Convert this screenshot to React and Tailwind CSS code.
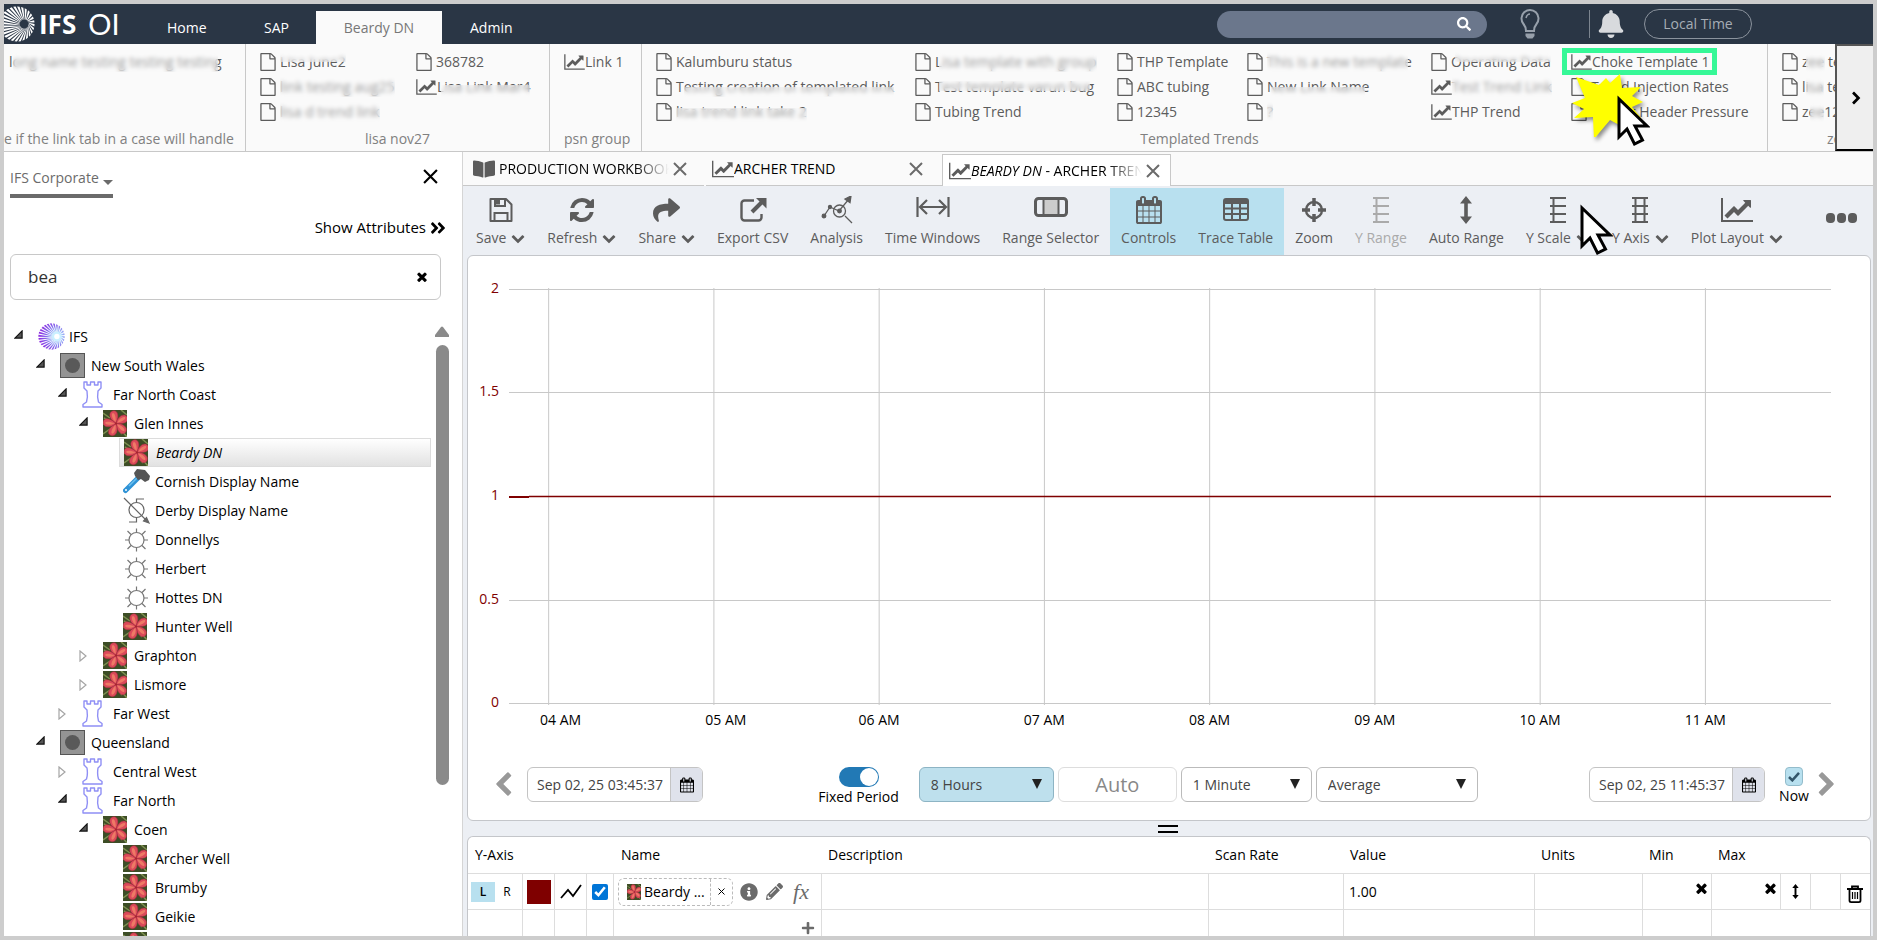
import { useState } from 'react';
import { FaShare, FaBell, FaSearch, FaInfoCircle, FaPencilAlt, FaPlus, FaAngleDoubleRight, FaBookOpen } from 'react-icons/fa';
import clsx from 'clsx';

function Glyph({ viewBox = '0 0 1792 1792', d, className }) {
  return (
    <svg viewBox={viewBox} fill="currentColor" className={clsx('shrink-0', className)} aria-hidden="true">
      <path d={d} />
    </svg>
  );
}

const FileIcon = ({ className = 'h-[18px] w-4' }) => (
  <Glyph
    viewBox="128 0 1536 1792"
    className={className}
    d="M1596 380q28 28 48 76t20 88v1152q0 40-28 68t-68 28h-1344q-40 0-68-28t-28-68v-1600q0-40 28-68t68-28h896q40 0 88 20t76 48zm-444-244v376h376q-10-29-22-41l-313-313q-12-12-41-22zm384 1528v-1024h-416q-40 0-68-28t-28-68v-416h-768v1536h1280z"
  />
);

const LineChartIcon = ({ className = 'h-[18px] w-[21px]' }) => (
  <Glyph
    viewBox="0 0 2048 1792"
    className={className}
    d="M2048 1536v128h-2048v-1536h128v1408h1920zm-128-1248v435q0 21-19.5 29.5t-35.5-7.5l-121-121-633 633q-10 10-23 10t-23-10l-233-233-416 416-192-192 585-585q10-10 23-10t23 10l233 233 464-464-121-121q-16-16-7.5-35.5t29.5-19.5h435q14 0 23 9t9 23z"
  />
);

const ChevronIcon = ({ className }) => (
  <Glyph
    className={className}
    d="M1683 808l-742 741q-19 19-45 19t-45-19l-742-741q-19-19-19-45.5t19-45.5l166-165q19-19 45-19t45 19l531 531 531-531q19-19 45-19t45 19l166 165q19 19 19 45.5t-19 45.5z"
  />
);

const TimesIcon = ({ className }) => (
  <Glyph
    viewBox="300 300 1192 1256"
    className={className}
    d="M1490 1322q0 40-28 68l-136 136q-28 28-68 28t-68-28l-294-294-294 294q-28 28-68 28t-68-28l-136-136q-28-28-28-68t28-68l294-294-294-294q-28-28-28-68t28-68l136-136q28-28 68-28t68 28l294 294 294-294q28-28 68-28t68 28l136 136q28 28 28 68t-28 68l-294 294 294 294q28 28 28 68z"
  />
);

const CalendarIcon = ({ className }) => (
  <Glyph
    viewBox="64 0 1664 1792"
    className={className}
    d="M192 1664h288v-288h-288v288zm352 0h320v-288h-320v288zm-352-352h288v-320h-288v320zm352 0h320v-320h-320v320zm-352-384h288v-288h-288v288zm736 736h320v-288h-320v288zm-384-736h320v-288h-320v288zm768 736h288v-288h-288v288zm-384-352h320v-320h-320v320zm-352-864v-288q0-13-9.5-22.5t-22.5-9.5h-64q-13 0-22.5 9.5t-9.5 22.5v288q0 13 9.5 22.5t22.5 9.5h64q13 0 22.5-9.5t9.5-22.5zm736 864h288v-320h-288v320zm-384-384h320v-288h-320v288zm384 0h288v-288h-288v288zm32-480v-288q0-13-9.5-22.5t-22.5-9.5h-64q-13 0-22.5 9.5t-9.5 22.5v288q0 13 9.5 22.5t22.5 9.5h64q13 0 22.5-9.5t9.5-22.5zm384-64v1280q0 52-38 90t-90 38h-1408q-52 0-90-38t-38-90v-1280q0-52 38-90t90-38h128v-96q0-66 47-113t113-47h64q66 0 113 47t47 113v96h384v-96q0-66 47-113t113-47h64q66 0 113 47t47 113v96h128q52 0 90 38t38 90z"
  />
);

const RefreshIcon = ({ className }) => (
  <Glyph
    className={className}
    d="M1639 1056q0 5-1 7-64 268-268 434.5t-478 166.5q-146 0-282.5-55t-243.5-157l-129 129q-19 19-45 19t-45-19-19-45v-448q0-26 19-45t45-19h448q26 0 45 19t19 45-19 45l-137 137q71 66 161 102t187 36q134 0 250-65t186-179q11-17 53-117 8-23 30-23h192q13 0 22.5 9.5t9.5 22.5zm25-800v448q0 26-19 45t-45 19h-448q-26 0-45-19t-19-45 19-45l138-138q-148-137-349-137-134 0-250 65t-186 179q-11 17-53 117-8 23-30 23h-199q-13 0-22.5-9.5t-9.5-22.5v-7q65-268 270-434.5t480-166.5q146 0 284 55.5t245 156.5l130-129q19-19 45-19t45 19 19 45z"
  />
);

function Stroke({ viewBox = '0 0 28 28', width = 2, className = 'h-7 w-7', children }) {
  return (
    <svg viewBox={viewBox} fill="none" stroke="currentColor" strokeWidth={width} className={clsx('shrink-0', className)} aria-hidden="true">
      {children}
    </svg>
  );
}

const CloseIcon = ({ className = 'h-[15px] w-[15px]', width = 2 }) => (
  <Stroke viewBox="0 0 14 14" width={width} className={className}>
    <path d="M1 1l12 12M13 1L1 13" />
  </Stroke>
);

const SaveIcon = () => (
  <Stroke>
    <path d="M3.500 3h15.500l5.500 5.500v16.500h-21z" strokeLinejoin="round" />
    <path d="M8 3v7h10V3M7.500 25v-8h13v8" />
    <path d="M9 3.500h4v5h-4z" fill="currentColor" stroke="none" />
  </Stroke>
);

const ExportIcon = () => (
  <Stroke width={2.4}>
    <path d="M15 4.500H5.500a3 3 0 0 0-3 3v14a3 3 0 0 0 3 3h14a3 3 0 0 0 3-3V18" />
    <path d="M13 16L23 6" strokeWidth="4" />
    <path d="M17 2h10.500v10.500z" fill="currentColor" stroke="none" />
  </Stroke>
);

const AnalysisIcon = () => (
  <Stroke viewBox="0 0 32 28" width={1.3} className="h-7 w-8">
    <path d="M3 20L9 11L18 15L28 3M24 20l7 7" />
    <circle cx="18.500" cy="15" r="6" />
    <circle cx="3" cy="20" r="1.800" fill="currentColor" />
    <circle cx="9" cy="11" r="1.500" fill="currentColor" />
    <circle cx="18.500" cy="15" r="1.800" fill="currentColor" />
    <path d="M30 0l-1 6.500-5-3.500z" fill="currentColor" />
  </Stroke>
);

const TimeWindowsIcon = () => (
  <Stroke viewBox="0 0 34 28" width={2.2} className="h-7 w-[34px]">
    <path d="M1.500 1v20M32.500 1v20M4 11h26M11 4l-7 7 7 7M23 4l7 7-7 7" />
  </Stroke>
);

const RangeIcon = () => (
  <Stroke viewBox="0 0 34 28" className="h-7 w-[34px]">
    <rect x="10" y="3" width="14" height="16" fill="#ccc" stroke="none" />
    <rect x="1.500" y="2.500" width="31" height="17" rx="3" strokeWidth="3" />
    <path d="M9.500 3v16M24.500 3v16" />
  </Stroke>
);

const TableIcon = () => (
  <Stroke viewBox="0 0 26 28" className="h-7 w-[26px]">
    <rect x="1" y="3" width="24" height="21" rx="2" />
    <path d="M1 5.500h24" strokeWidth="5" />
    <path d="M1 12.500h24M1 18h24M9 5v19M17 5v19" />
  </Stroke>
);

const ZoomIcon = () => (
  <Stroke width={2.4} className="h-7 w-6" viewBox="0 0 24 28">
    <circle cx="12" cy="14" r="8" />
    <path d="M12 2v8M12 18v8M0 14h8M16 14h8" strokeWidth="3.500" />
  </Stroke>
);

const YRangeIcon = () => (
  <Stroke viewBox="0 0 18 28" className="h-7 w-[18px]">
    <path d="M1 2h16M1 10h16M1 18h16M1 26h16M4.500 2v24" />
  </Stroke>
);

const YAxisIcon = () => (
  <Stroke viewBox="0 0 18 28" className="h-7 w-[18px]">
    <path d="M1 2h16M1 10h16M1 18h16M1 26h16M4.500 1v26M13.500 1v26" />
  </Stroke>
);

const UpDownIcon = ({ className = 'h-7 w-3' }) => (
  <Glyph viewBox="0 0 12 28" className={className} d="M6 0l6 7.500H7.800v13H12L6 28l-6-7.500h4.200v-13H0z" />
);

// Five petals on a leafy square
function Flower({ className = 'h-[27px] w-6' }) {
  return (
    <svg viewBox="0 0 24 27" preserveAspectRatio="none" className={clsx('shrink-0', className)} aria-hidden="true">
      <rect width="24" height="27" fill="#3d4d26" />
      <path d="M0 3l7 5M0 24l7-5M18 0l6 5M24 27l-6-7M0 14l5 1M1 8l5 3M18 24l3-5" stroke="#7d9050" strokeWidth="1.500" />
      {[-14, 60, 134, 204, 276].map((a) => (
        <g key={a} transform={`rotate(${a} 13 13.500)`}>
          <path d="M13 13.500C7 8 8 1 12.500 .5C18 0 18.500 7 13 13.500z" fill="#db4a5a" stroke="#9c2a3c" strokeWidth="0.500" />
          <path d="M13 12C10 8 10.500 3 12.500 2.500C14.500 3 14.500 8 13 12z" fill="#ee7a66" />
        </g>
      ))}
      <circle cx="13" cy="13.500" r="1" fill="#a8242c" />
    </svg>
  );
}

// Wedge-shaped rays that spread from an off-centre hub to a round rim
function Burst({ count, inner, outer, shift, twist, wedge, fill, glow, className }) {
  const rays = Array.from({ length: count }, (_, i) => {
    const a = (i / count) * Math.PI * 2;
    const at = (cx, r, t) => `${cx + r * Math.cos(t)},${20 + r * Math.sin(t)}`;
    return [
      at(20 + shift, inner, a - wedge),
      at(20, outer, a + twist - wedge),
      at(20, outer, a + twist + wedge),
      at(20 + shift, inner, a + wedge),
    ].join(' ');
  });
  return (
    <svg viewBox="0 0 40 40" className={clsx('shrink-0', className)} aria-hidden="true">
      {glow && (
        <defs>
          <radialGradient id="burst" gradientUnits="userSpaceOnUse" cx="28" cy="20" r="27">
            <stop offset="0" stopColor="#e6fbff" />
            <stop offset="0.300" stopColor="#9fc4f8" />
            <stop offset="0.600" stopColor="#8468ec" />
            <stop offset="1" stopColor="#8e2ae0" />
          </radialGradient>
        </defs>
      )}
      {rays.map((points) => (
        <polygon key={points} points={points} fill={fill} />
      ))}
      {glow && <circle cx="28" cy="20" r="7" fill="#c9f0ff" />}
      {glow && <circle cx="28" cy="20" r="4" fill="#fff" />}
    </svg>
  );
}

const Rook = () => (
  <Stroke viewBox="0 0 21 27" width={1.4} className="h-[27px] w-[21px] text-[#8f8ff5]">
    <path d="M2 1h3v3h3.500V1h4v3H16V1h3v6l-3 3q-1 6 .5 11l3.500 2.500V26H1v-2.500L4.500 21Q6 16 5 10L2 7z" strokeLinejoin="round" />
  </Stroke>
);

const Region = () => (
  <svg viewBox="0 0 25 25" className="h-[25px] w-[25px] shrink-0" aria-hidden="true">
    <rect x="0.500" y="0.500" width="24" height="24" fill="#949494" stroke="#555" />
    <circle cx="12.500" cy="12.500" r="7.500" fill="#595959" />
  </svg>
);

const Hammer = () => (
  <svg viewBox="0 0 27 25" className="h-[25px] w-[27px] shrink-0" aria-hidden="true">
    <path d="M2.500 21.500L15 9" stroke="#2f93d6" strokeWidth="5" strokeLinecap="round" />
    <path d="M6 17L15 8" stroke="#6cc0ee" strokeWidth="1.500" />
    <circle cx="3" cy="21" r="1" fill="#fff" />
    <path d="M11 4l3-4 8 1 5 6-1 4-4 2-4-3-3 1-3-4z" fill="#555" />
  </svg>
);

const Pump = () => (
  <Stroke viewBox="0 0 27 27" width={1.2} className="h-[27px] w-[27px] text-[#666]">
    <circle cx="13.500" cy="13" r="7.500" />
    <path d="M1 1l22 22M13.500 6V2H21M13.500 20.500V25H6" />
    <path d="M26 26l-5.500-2 3-3.500z" fill="currentColor" />
  </Stroke>
);

const Well = () => (
  <Stroke viewBox="0 0 27 27" width={1.2} className="h-[27px] w-[27px] text-[#777]">
    <circle cx="13.500" cy="14" r="7.500" />
    <path d="M13.500 2.500v4M13.500 21.500v4M2 14h4M21 14h4M4.500 5l3.500 3.500M22.500 5l-3.500 3.500M4.500 23L8 19.500M22.500 23L19 19.500" />
  </Stroke>
);

const TrashIcon = () => (
  <Stroke viewBox="0 0 16 18" width={1.8} className="h-[18px] w-4">
    <path d="M0 4h16M5 4V1.500h6V4M2.500 4v11.500q0 1.600 1.600 1.600h7.800q1.600 0 1.600-1.600V4" />
    <path d="M5.500 7v7M8 7v7M10.500 7v7" strokeWidth="1.200" />
  </Stroke>
);

const Cursor = ({ className }) => (
  <svg viewBox="0 0 33 51" className={clsx('pointer-events-none absolute z-30 h-[51px] w-[33px]', className)} aria-hidden="true">
    <path d="M2 4v38l8-8 7.500 15 8-4-7.500-14h12z" fill="#fff" stroke="#000" strokeWidth="3" />
  </svg>
);

const ribbon = [
  {
    label: 'e if the link tab in a case will handle',
    className: 'w-[242px] pl-[5px] [&>h2]:text-left [&>h2]:-ml-[5px]',
    columns: [
      { className: 'w-full', links: [{ text: 'long name testing testing testing', hide: 'left-1 right-1 inset-y-0' }] },
    ],
  },
  {
    label: 'lisa nov27',
    className: 'w-[304px] pl-3.5 [&>h2]:pr-3.5',
    columns: [
      {
        className: 'w-[156px]',
        links: [
          { icon: FileIcon, text: 'Lisa June2', hide: 'inset-x-0 top-0 bottom-2.5' },
          { icon: FileIcon, text: 'link testing aug25', hide: 'inset-0' },
          { icon: FileIcon, text: 'lisa d trend link', hide: 'inset-0' },
        ],
      },
      {
        className: 'w-[130px]',
        links: [
          { icon: FileIcon, text: '368782' },
          { icon: LineChartIcon, text: 'Lisa Link Mar4', hide: 'left-1 right-0 top-2 bottom-0' },
        ],
      },
    ],
  },
  {
    label: 'psn group',
    className: 'w-[92px] pl-3.5 [&>h2]:text-left',
    columns: [{ className: 'w-full', links: [{ icon: LineChartIcon, text: 'Link 1' }] }],
  },
  {
    label: 'Templated Trends',
    className: 'w-[1126px] pl-3.5 [&>h2]:pr-6',
    columns: [
      {
        className: 'w-[259px]',
        links: [
          { icon: FileIcon, text: 'Kalumburu status' },
          { icon: FileIcon, text: 'Testing creation of templated link', hide: 'left-2 right-0 top-2.5 bottom-0' },
          { icon: FileIcon, text: 'lisa trend link take 2', hide: 'inset-x-0 top-1.5 bottom-0' },
        ],
      },
      {
        className: 'w-[202px]',
        links: [
          { icon: FileIcon, text: 'Lisa template with group', hide: 'left-1 right-0 inset-y-0' },
          { icon: FileIcon, text: 'Test template varun bug', hide: 'left-1 right-1 top-1 bottom-1.5' },
          { icon: FileIcon, text: 'Tubing Trend' },
        ],
      },
      {
        className: 'w-[130px]',
        links: [
          { icon: FileIcon, text: 'THP Template' },
          { icon: FileIcon, text: 'ABC tubing' },
          { icon: FileIcon, text: '12345' },
        ],
      },
      {
        className: 'w-[184px]',
        links: [
          { icon: FileIcon, text: 'This is a new template', hide: 'left-0 right-1 inset-y-0' },
          { icon: FileIcon, text: 'New Link Name', hide: 'left-1 right-1 top-2.5 bottom-0' },
          { icon: FileIcon, text: '?', hide: 'inset-0' },
        ],
      },
      {
        className: 'w-[140px]',
        links: [
          { icon: FileIcon, text: 'Operating Data', hide: 'left-1 right-0 top-0 bottom-2.5' },
          { icon: LineChartIcon, text: 'Test Trend Link', hide: 'inset-0' },
          { icon: LineChartIcon, text: 'THP Trend' },
        ],
      },
      {
        className: 'w-[190px]',
        links: [
          { icon: LineChartIcon, text: 'Choke Template 1', marked: true },
          { icon: FileIcon, text: 'Trend Injection Rates' },
          { icon: FileIcon, text: 'Tubing Header Pressure' },
        ],
      },
    ],
  },
  {
    label: 'zoe',
    className: 'flex-1 pl-3.5 [&>h2]:text-left [&>h2]:pl-[45px]',
    columns: [
      {
        className: 'w-full',
        links: [
          { icon: FileIcon, text: 'zee te', hide: 'left-1 right-4 inset-y-0' },
          { icon: FileIcon, text: 'lisa te', hide: 'left-1 right-4 inset-y-0' },
          { icon: FileIcon, text: 'zee12', hide: 'left-2 right-4 inset-y-0' },
        ],
      },
    ],
  },
];

function RibbonLink({ icon: Icon, text, hide, marked }) {
  return (
    <li className="relative flex h-[25px] items-center whitespace-nowrap">
      <a href="#" className={clsx('flex items-center', Icon === FileIcon && 'gap-1')}>
        {Icon && <Icon />}
        <span className="relative">
          {text}
          {hide && <span className={clsx('absolute bg-[#fafafa]/40 backdrop-blur-[2px]', hide)} />}
        </span>
      </a>
      {marked && (
        <>
          <span className="absolute -left-[9px] -top-px h-[27px] w-[155px] border-[5px] border-[#36f897]" />
          <svg viewBox="0 0 76 64" className="absolute left-0 top-6 z-20 h-16 w-[76px] drop-shadow-[2px_3px_2px_rgba(0,0,0,0.450)]" aria-hidden="true">
            <path
              d="M5 4l23 8 7-7 4 5 10-9 2 14 19-1-9 9 11 6-11 5 9 11-16-3-2 12-13-7-16 19-1-22-19 1 10-9-12-6 13-5z"
              fill="#ff0"
            />
          </svg>
          <Cursor className="left-[46px] top-[46px]" />
        </>
      )}
    </li>
  );
}

function Header() {
  return (
    <header className="flex h-10 shrink-0 items-end bg-[#2a3645] text-white">
      <div className="flex h-full w-[134px] items-center overflow-hidden">
        <Burst count={28} inner={5} outer={19.5} shift={8} twist={0.3} wedge={0.07} fill="#fff" className="-ml-[5px] h-9 w-9" />
        <span className="ml-1 text-[26px] font-bold leading-10">IFS</span>
        <span className="ml-3 font-[Lato] text-[29px] leading-10">OI</span>
      </div>
      <nav className="flex h-[33px] items-center" aria-label="Main">
        <a href="#" className="w-24 pl-[29px]">Home</a>
        <a href="#" className="w-[82px] pl-[30px]">SAP</a>
        <a href="#" className="flex h-full w-[126px] items-center justify-center bg-[#fafafa] text-[#777]">Beardy DN</a>
        <a href="#" className="px-7">Admin</a>
      </nav>
      <div className="flex h-full flex-1 items-center justify-end pr-[121px]">
        <label className="flex h-[27px] w-[270px] items-center rounded-full bg-[#6b778c] pr-4">
          <input type="search" aria-label="Search" className="min-w-0 flex-1 bg-transparent px-3 outline-none" />
          <FaSearch className="h-3.5 w-3.5" />
        </label>
        <button type="button" aria-label="Tips" className="ml-[33px] text-[#97a0ab]">
          <Stroke viewBox="0 0 20 30" className="h-[30px] w-5">
            <path d="M6 22q0-4-2.500-7a8.500 8.500 0 1 1 13 0Q14 18 14 22z" />
            <path d="M6 9q1-4 4-4" strokeWidth="1.500" />
            <path d="M5.500 24.500h9v2.500l-2 2.500h-5l-2-2.500z" fill="currentColor" stroke="none" />
          </Stroke>
        </button>
        <span className="ml-[49px] h-7 w-px bg-[#7c858f]" />
        <button type="button" aria-label="Notifications" className="ml-2 text-[#d8dadd]">
          <FaBell className="h-7 w-[26px]" />
        </button>
        <button type="button" className="ml-5 h-[30px] w-[108px] rounded-full border border-[#8b939d] text-[#a6adb5]">
          Local Time
        </button>
      </div>
    </header>
  );
}

function Ribbon() {
  return (
    <div className="flex h-[108px] shrink-0 border-b border-[#c8c8c8] bg-[#fafafa] text-[#5c5c5c]">
      <div className="flex min-w-0 flex-1">
        {ribbon.map((g, i) => (
          <section
            key={g.label}
            className={clsx('flex shrink-0 flex-col overflow-hidden border-r border-[#c8c8c8] pt-[5px]', i === 4 && 'min-w-0 shrink border-r-0', g.className)}
          >
            <div className="flex flex-1">
              {g.columns.map((c, n) => (
                <ul key={n} className={clsx('shrink-0', c.className)}>
                  {c.links.map((l) => (
                    <RibbonLink key={l.text} {...l} />
                  ))}
                </ul>
              ))}
            </div>
            <h2 className="h-[22px] whitespace-nowrap text-center leading-5 text-[#808080]">{g.label}</h2>
          </section>
        ))}
      </div>
      <button
        type="button"
        aria-label="Scroll right"
        className="flex w-[38px] shrink-0 items-center justify-center border-y-2 border-l-2 border-b-black border-l-[#555] border-t-[#555] bg-[#efefef] text-black"
      >
        <ChevronIcon className="h-3.5 w-3.5 -rotate-90" />
      </button>
    </div>
  );
}

const tree = [
  { level: 0, text: 'IFS', kind: 'ifs', open: true },
  { level: 1, text: 'New South Wales', kind: 'region', open: true },
  { level: 2, text: 'Far North Coast', kind: 'rook', open: true },
  { level: 3, text: 'Glen Innes', kind: 'flower', open: true },
  { level: 4, text: 'Beardy DN', kind: 'flower', selected: true },
  { level: 4, text: 'Cornish Display Name', kind: 'hammer' },
  { level: 4, text: 'Derby Display Name', kind: 'pump' },
  { level: 4, text: 'Donnellys', kind: 'well' },
  { level: 4, text: 'Herbert', kind: 'well' },
  { level: 4, text: 'Hottes DN', kind: 'well' },
  { level: 4, text: 'Hunter Well', kind: 'flower' },
  { level: 3, text: 'Graphton', kind: 'flower', open: false },
  { level: 3, text: 'Lismore', kind: 'flower', open: false },
  { level: 2, text: 'Far West', kind: 'rook', open: false },
  { level: 1, text: 'Queensland', kind: 'region', open: true },
  { level: 2, text: 'Central West', kind: 'rook', open: false },
  { level: 2, text: 'Far North', kind: 'rook', open: true },
  { level: 3, text: 'Coen', kind: 'flower', open: true },
  { level: 4, text: 'Archer Well', kind: 'flower' },
  { level: 4, text: 'Brumby', kind: 'flower' },
  { level: 4, text: 'Geikie', kind: 'flower' },
  { level: 4, text: '', kind: 'flower' },
];

const kinds = {
  ifs: <Burst count={26} inner={4} outer={19.5} shift={8} twist={0.3} wedge={0.07} fill="url(#burst)" glow className="h-[27px] w-[27px]" />,
  region: <Region />,
  rook: <Rook />,
  flower: <Flower />,
  hammer: <Hammer />,
  pump: <Pump />,
  well: <Well />,
};

const indents = ['pl-2', 'pl-[30px]', 'pl-[52px]', 'pl-[73px]', 'pl-[115px]'];

function TreeRow({ level, text, kind, open, selected }) {
  const branch = open !== undefined;
  return (
    <li className={clsx('flex h-[29px] items-center', indents[level])}>
      {branch && (
        <button type="button" aria-label={open ? 'Collapse' : 'Expand'} className="w-[22px] shrink-0">
          {open ? (
            <svg viewBox="0 0 10 10" className="mx-0.5 -mt-1 h-[9px] w-[9px]">
              <path d="M9 1v8H1z" fill="#555" stroke="#111" strokeWidth="1.300" />
            </svg>
          ) : (
            <svg viewBox="0 0 8 12" className="mx-0.5 h-3 w-2">
              <path d="M1 1l6 5-6 5z" fill="#fff" stroke="#a5a5a5" strokeWidth="1.200" />
            </svg>
          )}
        </button>
      )}
      <button
        type="button"
        className={clsx(
          'flex h-[29px] items-center whitespace-nowrap text-left',
          !branch && 'flex-1 pl-1',
          selected && 'border border-[#dcdcdc] bg-linear-to-b from-white to-[#e2e2e2] italic'
        )}
      >
        <span className={clsx('flex shrink-0', branch ? 'w-[35px] pl-1' : 'w-8')}>{kinds[kind]}</span>
        {text}
      </button>
    </li>
  );
}

function Sidebar() {
  const [query, setQuery] = useState('bea');
  return (
    <aside className="flex w-[459px] shrink-0 flex-col overflow-hidden border-r border-[#d5d5d5] bg-white text-black">
      <div className="flex h-[46px] items-end justify-between pl-1.5 pr-6">
        <button type="button" className="flex h-9 items-start gap-1 border-b-4 border-[#6b6b6b] pt-1.5 text-[#6b6b6b]">
          IFS Corporate
          <svg viewBox="0 0 10 5" className="mt-3 h-[5px] w-2.5">
            <path d="M0 0h10L5 5z" fill="currentColor" />
          </svg>
        </button>
        <button type="button" aria-label="Close panel" className="mb-3.5">
          <CloseIcon />
        </button>
      </div>
      <button type="button" className="mr-4 mt-[18px] flex h-6 items-center gap-1 self-end text-[15px]">
        Show Attributes <FaAngleDoubleRight className="h-[18px] w-4" />
      </button>
      <div className="mx-1.5 mr-[21px] mt-3.5 flex h-[46px] shrink-0 items-center rounded-md border border-[#c8c8c8] pl-[17px] pr-[13px]">
        <input
          aria-label="Search hierarchy"
          value={query}
          onChange={(e) => setQuery(e.target.value)}
          className="min-w-0 flex-1 text-[17px] text-[#333] outline-none"
        />
        <button type="button" aria-label="Clear search" onClick={() => setQuery('')}>
          <TimesIcon className="h-2.5 w-2.5" />
        </button>
      </div>
      <div className="mt-[22px] flex min-h-0 flex-1">
        <ul className="w-[427px] overflow-hidden">
          {tree.map((n, i) => (
            <TreeRow key={i} {...n} />
          ))}
        </ul>
        <div className="ml-1 flex w-3.5 flex-col items-center gap-2 pt-1">
          <svg viewBox="0 0 14 11" className="h-[11px] w-3.5" aria-hidden="true">
            <path d="M6 1q1-1 2 0l6 8v2H0V9z" fill="#8a8a8a" />
          </svg>
          <div className="h-[440px] w-[13px] rounded-full bg-[#8a8a8a]" />
        </div>
      </div>
    </aside>
  );
}

function DocTab({ icon, active, fade, className, children }) {
  return (
    <div
      className={clsx(
        'flex items-center pl-1.5 pr-2.5',
        active ? 'mt-0.5 border-x border-t border-[#c8c8c8] bg-white' : 'border-b border-[#c8c8c8]',
        className
      )}
    >
      <span className="text-[#5c5c5c]">{icon}</span>
      <button
        type="button"
        className={clsx('min-w-0 flex-1 overflow-hidden whitespace-nowrap text-left', fade && 'mask-r-from-80% mask-r-to-100%')}
      >
        {children}
      </button>
      <button type="button" aria-label="Close tab" className="ml-1 text-[#6b6b6b]">
        <CloseIcon className="h-3.5 w-3.5" />
      </button>
    </div>
  );
}

const tools = [
  { label: 'Save', icon: <SaveIcon />, menu: true },
  { label: 'Refresh', icon: <RefreshIcon className="h-7 w-7" />, menu: true },
  { label: 'Share', icon: <FaShare className="h-7 w-[27px]" />, menu: true },
  { label: 'Export CSV', icon: <ExportIcon /> },
  { label: 'Analysis', icon: <AnalysisIcon /> },
  { label: 'Time Windows', icon: <TimeWindowsIcon /> },
  { label: 'Range Selector', icon: <RangeIcon /> },
  { label: 'Controls', icon: <CalendarIcon className="h-7 w-[26px]" />, on: true },
  { label: 'Trace Table', icon: <TableIcon />, on: true },
  { label: 'Zoom', icon: <ZoomIcon /> },
  { label: 'Y Range', icon: <YRangeIcon />, disabled: true },
  { label: 'Auto Range', icon: <UpDownIcon /> },
  { label: 'Y Scale', icon: <YRangeIcon />, menu: true },
  { label: 'Y Axis', icon: <YAxisIcon />, menu: true },
  { label: 'Plot Layout', icon: <LineChartIcon className="h-7 w-8" />, menu: true },
];

function Toolbar() {
  return (
    <div className="relative flex h-[69px] shrink-0 pl-0.5 pt-0.5 text-[#5c5c5c]">
      {tools.map((t) => (
        <button
          key={t.label}
          type="button"
          disabled={t.disabled}
          className={clsx(
            'flex h-[67px] flex-col items-center gap-1 whitespace-nowrap px-[11px] pt-2',
            t.on && 'bg-[#b8e0ef]',
            t.disabled && 'text-[#aaa]'
          )}
        >
          <span className="flex h-7 items-center">{t.icon}</span>
          <span className="flex items-center gap-[5px]">
            {t.label}
            {t.menu && <ChevronIcon className="h-3.5 w-3.5" />}
          </span>
        </button>
      ))}
      <button type="button" aria-label="More" className="-mt-2 ml-auto mr-4 flex items-center gap-0.5">
        <span className="h-2.5 w-[9px] rounded-sm bg-[#5c5c5c]" />
        <span className="h-2.5 w-[9px] rounded-sm bg-[#5c5c5c]" />
        <span className="h-2.5 w-[9px] rounded-sm bg-[#5c5c5c]" />
      </button>
      <Cursor className="left-[1117px] top-[18px]" />
    </div>
  );
}

const yTicks = [
  { label: '2', y: 19 },
  { label: '1.5', y: 122 },
  { label: '1', y: 226 },
  { label: '0.5', y: 330 },
  { label: '0', y: 433 },
];
const hours = ['04', '05', '06', '07', '08', '09', '10', '11'];

function Chart() {
  return (
    <div className="mt-3.5 flex pl-2.5 pr-[39px] text-black">
      <svg className="h-[470px] w-[21px]" fill="#7f0000" textAnchor="end" aria-hidden="true">
        {yTicks.map((t) => (
          <text key={t.label} x="21" y={t.y + 4}>{t.label}</text>
        ))}
      </svg>
      <svg className="ml-2.5 h-[470px] min-w-0 flex-1 overflow-visible" role="img" aria-label="Trend">
        {yTicks.map((t) => (
          <line key={t.label} x1="0" x2="100%" y1={t.y + 0.5} y2={t.y + 0.5} stroke="#c8c8c8" />
        ))}
        {hours.map((h, i) => (
          <g key={h}>
            <line x1={`${3 + i * 12.5}%`} x2={`${3 + i * 12.5}%`} y1="18" y2="435" stroke="#c8c8c8" />
            <text x={`${3 + i * 12.5}%`} dx={i < 2 ? 12 : 0} y="455" textAnchor="middle">{`${h} AM`}</text>
          </g>
        ))}
        <path d="M0 227h20" stroke="#7f0000" strokeWidth="2" />
        <line x1="20" x2="100%" y1="226.500" y2="226.500" stroke="#7f0000" strokeWidth="1.500" />
      </svg>
    </div>
  );
}

function DateField({ label, value }) {
  return (
    <div className="flex h-[35px] w-44 overflow-hidden rounded-md border border-[#c4c4c4]">
      <input aria-label={label} defaultValue={value} className="w-[142px] pl-[9px] text-[#444] outline-none" />
      <button type="button" aria-label="Pick date" className="flex flex-1 items-center justify-center border-l border-[#c4c4c4] bg-[#dfe2eb] text-black">
        <CalendarIcon className="h-4 w-3.5" />
      </button>
    </div>
  );
}

function Picker({ label, value, className }) {
  return (
    <div className={clsx('relative h-[35px]', className)}>
      <select aria-label={label} className="h-full w-full appearance-none rounded-md border border-[#bbb] pl-[11px] text-[#444]">
        <option>{value}</option>
      </select>
      <svg viewBox="0 0 10 10" className="pointer-events-none absolute right-3 top-3 h-2.5 w-2.5">
        <path d="M0 0h10L5 10z" fill="#222" />
      </svg>
    </div>
  );
}

function Controls() {
  const [fixed, setFixed] = useState(true);
  const [now, setNow] = useState(true);
  return (
    <div className="flex items-start pb-[13px] pl-[25px] pr-[33px] pt-[27px] text-black">
      <button type="button" aria-label="Earlier" className="mt-1 text-[#999]">
        <ChevronIcon className="h-[26px] w-[26px] rotate-90" />
      </button>
      <div className="ml-2">
        <DateField label="Start" value="Sep 02, 25 03:45:37" />
      </div>
      <div className="flex flex-1 justify-center gap-1 pl-1">
        <label className="mr-4 flex flex-col items-center">
          <input type="checkbox" className="peer sr-only" checked={fixed} onChange={(e) => setFixed(e.target.checked)} />
          <span className="flex h-5 w-10 items-center justify-end rounded-full bg-[#2279b5] px-px">
            <span className="h-[18px] w-[18px] rounded-full bg-white" />
          </span>
          Fixed Period
        </label>
        <Picker label="Period" value="8 Hours" className="w-[135px] [&>select]:border-[#8db4c4] [&>select]:bg-[#bee0ed]" />
        <input aria-label="Interval" placeholder="Auto" className="h-[35px] w-[119px] rounded-md border border-[#ddd] text-center text-[20px] placeholder:text-[#888]" />
        <Picker label="Sample" value="1 Minute" className="w-[131px]" />
        <Picker label="Aggregate" value="Average" className="w-[162px]" />
      </div>
      <DateField label="End" value="Sep 02, 25 11:45:37" />
      <label className="ml-3 flex w-[34px] flex-col items-center">
        <input type="checkbox" className="peer sr-only" checked={now} onChange={(e) => setNow(e.target.checked)} />
        <span className="flex h-[19px] w-[18px] items-center justify-center rounded border border-[#93bccb] bg-[#b8e0ef] text-[#33566a]">
          <Stroke viewBox="0 0 14 12" width={3} className="h-2.5 w-3">
            <path d="M1 6l4 4 8-9" />
          </Stroke>
        </span>
        Now
      </label>
      <button type="button" aria-label="Later" className="mt-1 text-[#999]">
        <ChevronIcon className="h-[26px] w-[26px] -rotate-90" />
      </button>
    </div>
  );
}

const headings = [
  { text: 'Y-Axis', span: 4, className: 'pl-[7px]' },
  { text: 'Name', className: 'pl-[7px]' },
  { text: 'Description', className: 'pl-1.5' },
  { text: 'Scan Rate', className: 'pl-1.5' },
  { text: 'Value', className: 'pl-1.5' },
  { text: 'Units', className: 'pl-1.5' },
  { text: 'Min', className: 'pl-1.5' },
  { text: 'Max', span: 4, className: 'pl-1.5' },
];
const cell = 'border-r border-t border-[#ddd] p-0 last:border-r-0';

function TraceTable() {
  return (
    <div className="ml-1 mr-0.5 min-h-0 flex-1 overflow-hidden rounded-t-md border border-b-0 border-[#c4c6ca] bg-white text-black">
      <table className="w-full table-fixed border-separate border-spacing-0">
        <colgroup>
          <col className="w-[55px]" />
          <col className="w-8" />
          <col className="w-8" />
          <col className="w-[27px]" />
          <col className="w-52" />
          <col />
          <col className="w-[135px]" />
          <col className="w-[191px]" />
          <col className="w-[108px]" />
          <col className="w-[69px]" />
          <col className="w-[69px]" />
          <col className="w-[30px]" />
          <col className="w-[30px]" />
          <col className="w-[29px]" />
        </colgroup>
        <thead>
          <tr className="h-9">
            {headings.map((h) => (
              <th key={h.text} colSpan={h.span} className={clsx('p-0 text-left font-normal', h.className)}>
                {h.text}
              </th>
            ))}
          </tr>
        </thead>
        <tbody>
          <tr className="h-9">
            <td className={cell}>
              <div className="flex pl-[3px] text-xs">
                <button type="button" className="h-5 w-6 bg-[#b8e0ef] font-semibold">L</button>
                <button type="button" className="h-5 w-6">R</button>
              </div>
            </td>
            <td className={cell}>
              <button type="button" aria-label="Trace colour" className="mx-auto block h-6 w-6 bg-[#7f0000]" />
            </td>
            <td className={cell}>
              <button type="button" aria-label="Line style" className="mx-auto block">
                <Stroke viewBox="0 0 22 16" width={1.8} className="h-4 w-[22px]">
                  <path d="M1 14L8 6l5 6L21 1" />
                </Stroke>
              </button>
            </td>
            <td className={cell}>
              <input type="checkbox" aria-label="Show trace" defaultChecked className="mx-auto block h-4 w-4 accent-[#0075d7]" />
            </td>
            <td className={cell}>
              <div className="flex items-center pl-1 text-[#6b6b6b]">
                <div className="flex h-7 w-[115px] items-center rounded-md border border-dashed border-[#bbb] pl-2 text-black">
                  <Flower className="h-4 w-3.5" />
                  <span className="ml-[3px] w-[66px]">Beardy ...</span>
                  <button type="button" aria-label="Remove" className="flex h-full flex-1 items-center justify-center border-l border-dashed border-[#bbb]">
                    <CloseIcon className="h-[7px] w-[7px]" />
                  </button>
                </div>
                <button type="button" aria-label="Info" className="ml-[7px]"><FaInfoCircle className="h-[18px] w-[18px]" /></button>
                <button type="button" aria-label="Edit" className="ml-2"><FaPencilAlt className="h-[17px] w-[17px]" /></button>
                <button type="button" aria-label="Function" className="ml-2.5 font-['Liberation_Serif'] text-[22px] italic leading-6">fx</button>
              </div>
            </td>
            <td className={cell} />
            <td className={cell} />
            <td className={clsx(cell, 'pl-[5px]!')}>1.00</td>
            <td className={cell} />
            <td className={cell}>
              <button type="button" aria-label="Clear min" className="mb-1.5 ml-auto mr-1 block"><TimesIcon className="h-[11px] w-[11px]" /></button>
            </td>
            <td className={cell}>
              <button type="button" aria-label="Clear max" className="mb-1.5 ml-auto mr-1 block"><TimesIcon className="h-[11px] w-[11px]" /></button>
            </td>
            <td className={cell}>
              <button type="button" aria-label="Auto scale" className="mx-auto block"><UpDownIcon className="h-[15px] w-[7px]" /></button>
            </td>
            <td className={cell} />
            <td className={cell}>
              <button type="button" aria-label="Delete" className="mx-auto mt-1 block"><TrashIcon /></button>
            </td>
          </tr>
          <tr className="h-9">
            <td className={cell} />
            <td className={cell} />
            <td className={cell} />
            <td className={cell} />
            <td className={cell}>
              <button type="button" aria-label="Add trace" className="ml-auto mr-1.5 block text-[#6b6b6b]"><FaPlus className="h-3.5 w-3.5" /></button>
            </td>
            <td className={cell} />
            <td className={cell} />
            <td className={cell} />
            <td className={cell} />
            <td className={cell} />
            <td className={cell} colSpan={4} />
          </tr>
        </tbody>
      </table>
    </div>
  );
}

export default function App() {
  return (
    <div className="flex h-screen flex-col overflow-hidden border-4 border-[#cdcdcd] bg-white font-['Open_Sans',sans-serif] text-sm">
      <Header />
      <Ribbon />
      <div className="flex min-h-0 flex-1">
        <Sidebar />
        <main className="flex min-w-0 flex-1 flex-col bg-[#eceff4]">
          <div className="flex h-[34px] shrink-0 bg-[#fafafa] text-black">
            <DocTab icon={<FaBookOpen className="mx-1 h-5 w-[22px]" />} fade className="w-[241px] pr-[17px]">
              PRODUCTION WORKBOOK
            </DocTab>
            <DocTab icon={<LineChartIcon className="h-5 w-[22px]" />} className="ml-0.5 w-[236px] pr-[19px]">
              ARCHER TREND
            </DocTab>
            <DocTab icon={<LineChartIcon className="h-5 w-[22px]" />} active fade className="w-[229px]">
              <em>BEARDY DN</em> - ARCHER TREND
            </DocTab>
            <div className="flex-1 border-b border-[#c8c8c8]" />
          </div>
          <Toolbar />
          <section className="ml-1 mr-0.5 shrink-0 rounded-md border border-[#c4c6ca] bg-white">
            <Chart />
            <Controls />
          </section>
          <div className="flex h-[15px] shrink-0 items-center justify-center">
            <div className="h-2 w-5 border-y-2 border-black" />
          </div>
          <TraceTable />
        </main>
      </div>
    </div>
  );
}
